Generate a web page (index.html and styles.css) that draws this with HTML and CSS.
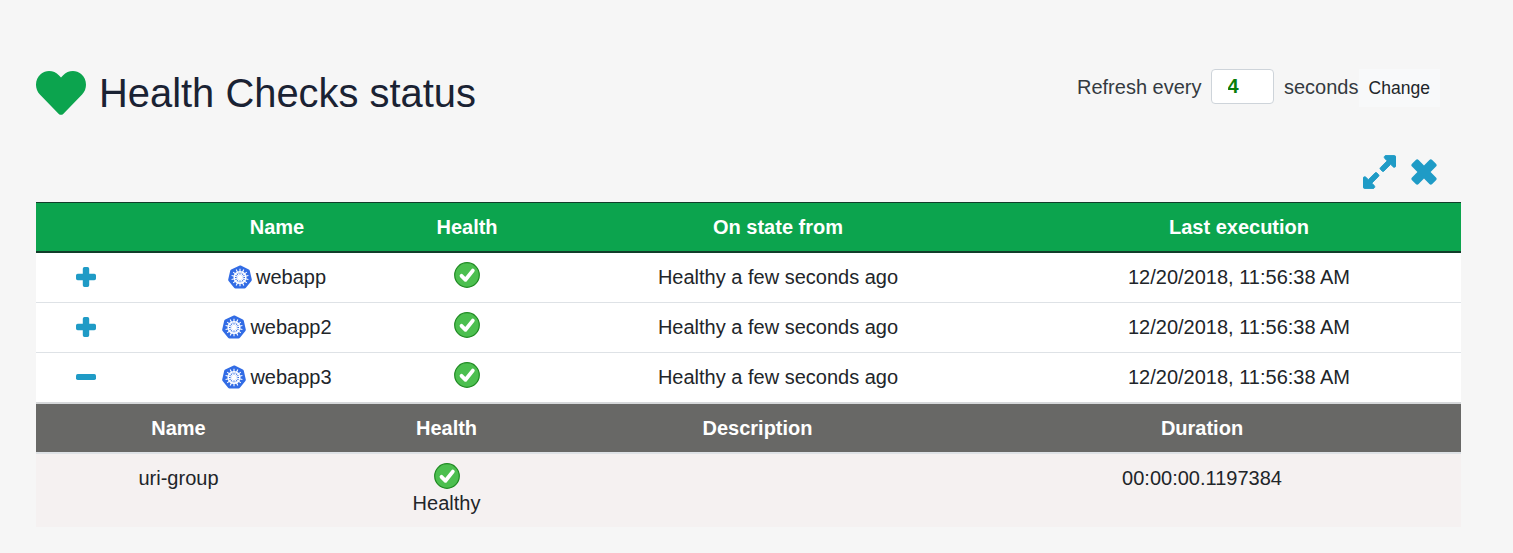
FILE: index.html
```html
<!DOCTYPE html>
<html lang="en">
<head>
<meta charset="utf-8">
<title>Health Checks status</title>
<link rel="stylesheet" href="styles.css">
</head>
<body>
<svg class="defs" aria-hidden="true">
  <defs>
    <symbol id="plus" viewBox="0 0 20 20"><path d="M8.500 0h3A1.700 1.700 0 0 1 13.200 1.700V6.800h5.100A1.700 1.700 0 0 1 20 8.500v3a1.700 1.700 0 0 1-1.700 1.700H13.200v5.100A1.700 1.700 0 0 1 11.500 20h-3a1.700 1.700 0 0 1-1.700-1.700V13.200H1.700A1.700 1.700 0 0 1 0 11.500v-3A1.700 1.700 0 0 1 1.700 6.800H6.800V1.700A1.700 1.700 0 0 1 8.500 0z"/></symbol>
    <symbol id="minus" viewBox="0 0 20 20"><rect x="0" y="7" width="20" height="6" rx="1.700"/></symbol>
    <symbol id="kube" viewBox="0 0 24 24">
      <path fill="#326ce5" d="M12 .4a1.800 1.800 0 0 1 .8.2l8 3.900a1.800 1.800 0 0 1 1 1.200l2 8.700a1.800 1.800 0 0 1-.4 1.500l-5.500 6.900a1.800 1.800 0 0 1-1.400.7H7.500a1.800 1.800 0 0 1-1.400-.7L.6 16a1.800 1.800 0 0 1-.4-1.500l2-8.700a1.800 1.800 0 0 1 1-1.200l8-3.900a1.800 1.800 0 0 1 .8-.2z"/>
      <g fill="none" stroke="#fff">
        <circle cx="12" cy="12.500" r="5.800" stroke-width="1.500"/>
        <path stroke-width="1.100" d="M12 3.800v17.400M5.200 7.100l13.600 10.800M18.800 7.100 5.200 17.900M3.600 14.500l16.800-4M20.400 14.500l-16.800-4M8.200 20.400l7.600-15.800M15.800 20.400 8.200 4.600"/>
      </g>
      <circle cx="12" cy="12.500" r="1.800" fill="#fff"/>
    </symbol>
    <symbol id="check" viewBox="0 0 26 26">
      <circle cx="13" cy="13" r="12.300" fill="#4cbf4f" stroke="#1f8a22" stroke-width="1.200"/>
      <path fill="none" stroke="#fff" stroke-width="3.800" stroke-linecap="round" stroke-linejoin="round" d="M7.500 13.800l4 4L18.800 8.600"/>
    </symbol>
  </defs>
</svg>
<main class="page">
  <header class="top">
    <h1 class="title">
      <svg class="heart" viewBox="0 0 512 512" aria-hidden="true"><path d="M462.3 62.600C407.500 15.900 326 24.300 275.700 76.200L256 96.500l-19.700-20.300C186.100 24.300 104.500 15.900 49.700 62.600c-62.800 53.600-66.100 149.800-9.900 207.900l193.500 199.800c12.500 12.900 32.800 12.900 45.300 0l193.500-199.800c56.300-58.100 53-154.300-9.800-207.900z"/></svg>
      Health Checks status
    </h1>
    <form class="refresh">
      <label class="refresh-label" for="secs">Refresh every</label>
      <input class="refresh-input" id="secs" type="text" value="4">
      <span class="refresh-unit">seconds</span>
      <button class="refresh-btn" type="button">Change</button>
    </form>
  </header>
  <div class="tools">
    <svg class="tool tool-expand" viewBox="0 0 448 512" aria-hidden="true"><path d="M212.686 315.314L120 408l32.922 31.029c15.120 15.120 4.412 40.971-16.970 40.971h-112C10.697 480 0 469.255 0 456V344c0-21.382 25.803-32.090 40.922-16.971L72 360l92.686-92.686c6.248-6.248 16.379-6.248 22.627 0l25.373 25.373c6.249 6.248 6.249 16.378 0 22.627zm22.628-118.628L328 104l-32.922-31.029C279.958 57.851 290.666 32 312.048 32h112C437.303 32 448 42.745 448 56v112c0 21.382-25.803 32.090-40.922 16.971L376 152l-92.686 92.686c-6.248 6.248-16.379 6.248-22.627 0l-25.373-25.373c-6.249-6.248-6.249-16.378 0-22.627z"/></svg>
    <svg class="tool tool-close" viewBox="0 0 26 26" aria-hidden="true"><path d="M7.600 1 13 6.400 18.400 1a2 2 0 0 1 2.800 0L25 4.800a2 2 0 0 1 0 2.800L19.600 13 25 18.400a2 2 0 0 1 0 2.800L21.200 25a2 2 0 0 1-2.800 0L13 19.600 7.600 25a2 2 0 0 1-2.800 0L1 21.200a2 2 0 0 1 0-2.800L6.400 13 1 7.600a2 2 0 0 1 0-2.800L4.800 1a2 2 0 0 1 2.800 0z"/></svg>
  </div>
  <table class="grid">
    <colgroup><col class="m0"><col class="m1"><col class="m2"><col class="m3"><col class="m4"></colgroup>
    <thead>
      <tr class="head"><th></th><th>Name</th><th>Health</th><th>On state from</th><th>Last execution</th></tr>
    </thead>
    <tbody>
      <tr class="row">
        <td class="toggle"><svg class="ico"><use href="#plus"/></svg></td>
        <td><span class="name"><svg class="kube"><use href="#kube"/></svg>webapp</span></td>
        <td class="state"><svg class="check"><use href="#check"/></svg></td>
        <td>Healthy a few seconds ago</td>
        <td>12/20/2018, 11:56:38 AM</td>
      </tr>
      <tr class="row">
        <td class="toggle"><svg class="ico"><use href="#plus"/></svg></td>
        <td><span class="name"><svg class="kube"><use href="#kube"/></svg>webapp2</span></td>
        <td class="state"><svg class="check"><use href="#check"/></svg></td>
        <td>Healthy a few seconds ago</td>
        <td>12/20/2018, 11:56:38 AM</td>
      </tr>
      <tr class="row">
        <td class="toggle"><svg class="ico"><use href="#minus"/></svg></td>
        <td><span class="name"><svg class="kube"><use href="#kube"/></svg>webapp3</span></td>
        <td class="state"><svg class="check"><use href="#check"/></svg></td>
        <td>Healthy a few seconds ago</td>
        <td>12/20/2018, 11:56:38 AM</td>
      </tr>
    </tbody>
  </table>
  <table class="grid sub">
    <colgroup><col class="s0"><col class="s1"><col class="s2"><col class="s3"></colgroup>
    <thead>
      <tr class="subhead"><th>Name</th><th>Health</th><th>Description</th><th>Duration</th></tr>
    </thead>
    <tbody>
      <tr class="subrow">
        <td>uri-group</td>
        <td><svg class="check"><use href="#check"/></svg><div>Healthy</div></td>
        <td></td>
        <td>00:00:00.1197384</td>
      </tr>
    </tbody>
  </table>
</main>
</body>
</html>
```

FILE: styles.css
```css
* { box-sizing: border-box; }
html, body { margin: 0; height: 100%; overflow: hidden; }
body {
  background: #f6f6f6;
  color: #212529;
  font-family: "Liberation Sans", Arial, sans-serif;
  font-size: 20px;
  line-height: 30px;
}
.defs { display: none; }
.page { padding: 69px 52px 26px 36px; }

.top { display: flex; justify-content: space-between; align-items: flex-start; height: 86px; }
.title {
  display: flex;
  align-items: center;
  gap: 13px;
  margin: 0;
  height: 48px;
  font-size: 39.9px;
  font-weight: 400;
  line-height: 48px;
  color: #1a2233;
}
.heart { width: 50px; height: 50px; fill: #0ca44e; flex: none; }

.refresh { display: flex; align-items: flex-start; margin-right: 21px; height: 38px; }
.refresh-label { line-height: 36px; color: #343a40; }
.refresh-input {
  width: 63px;
  height: 35px;
  margin: 0 10.5px 0 9px;
  padding: 0 0 0 16px;
  border: 1px solid #ced4da;
  border-radius: 4px;
  background: #fff;
  color: #0a7d0a;
  font: 700 20px "Liberation Sans", Arial, sans-serif;
}
.refresh-unit { line-height: 36px; color: #343a40; }
.refresh-btn {
  width: 81.5px;
  height: 38px;
  border: 0;
  padding: 0;
  background: #f8f9fa;
  color: #212529;
  font: 400 17.5px "Liberation Sans", Arial, sans-serif;
}

.tools { display: flex; justify-content: flex-end; align-items: center; gap: 15px; height: 47px; padding: 0 24px 14px 0; }
.tool { fill: #1f9bc6; display: block; }
.tool-expand { width: 33px; height: 38px; stroke: #1f9bc6; stroke-width: 12; }
.tool-close { width: 26px; height: 26px; }

.grid { width: 100%; border-collapse: separate; border-spacing: 0; table-layout: fixed; }
.m0 { width: 123px; }
.m1 { width: 236px; }
.m2 { width: 144px; }
.m3 { width: 478px; }
.s0 { width: 285px; }
.s1 { width: 251px; }
.s2 { width: 371px; }

th, td { padding: 0; text-align: center; font-weight: 400; }
th { font-weight: 700; color: #fff; }

.head th { height: 51px; background: #0ca44e; border-top: 1px solid #123d2a; border-bottom: 2px solid #123d2a; }
.row td { height: 50px; padding-bottom: 2px; background: #fff; border-bottom: 1px solid #dee2e6; }
.row:last-child td { height: 51px; border-bottom: 2px solid #d6d8da; }
.row td.toggle { padding-right: 24px; }
.ico { display: block; width: 20px; height: 20px; margin: 0 auto; fill: #1f9bc6; }
.name { display: flex; justify-content: center; align-items: center; gap: 4px; }
.kube { width: 24px; height: 24px; flex: none; }
.row td.state { vertical-align: top; padding-top: 9px; }
.check { display: block; width: 26px; height: 26px; margin: 0 auto; }

.subhead th { height: 50px; background: #686866; border-bottom: 2px solid #dee2e6; }
.subrow td { height: 73px; background: #f5f1f1; vertical-align: top; padding-top: 9px; }
.subrow td div { margin-top: -1px; }
```
